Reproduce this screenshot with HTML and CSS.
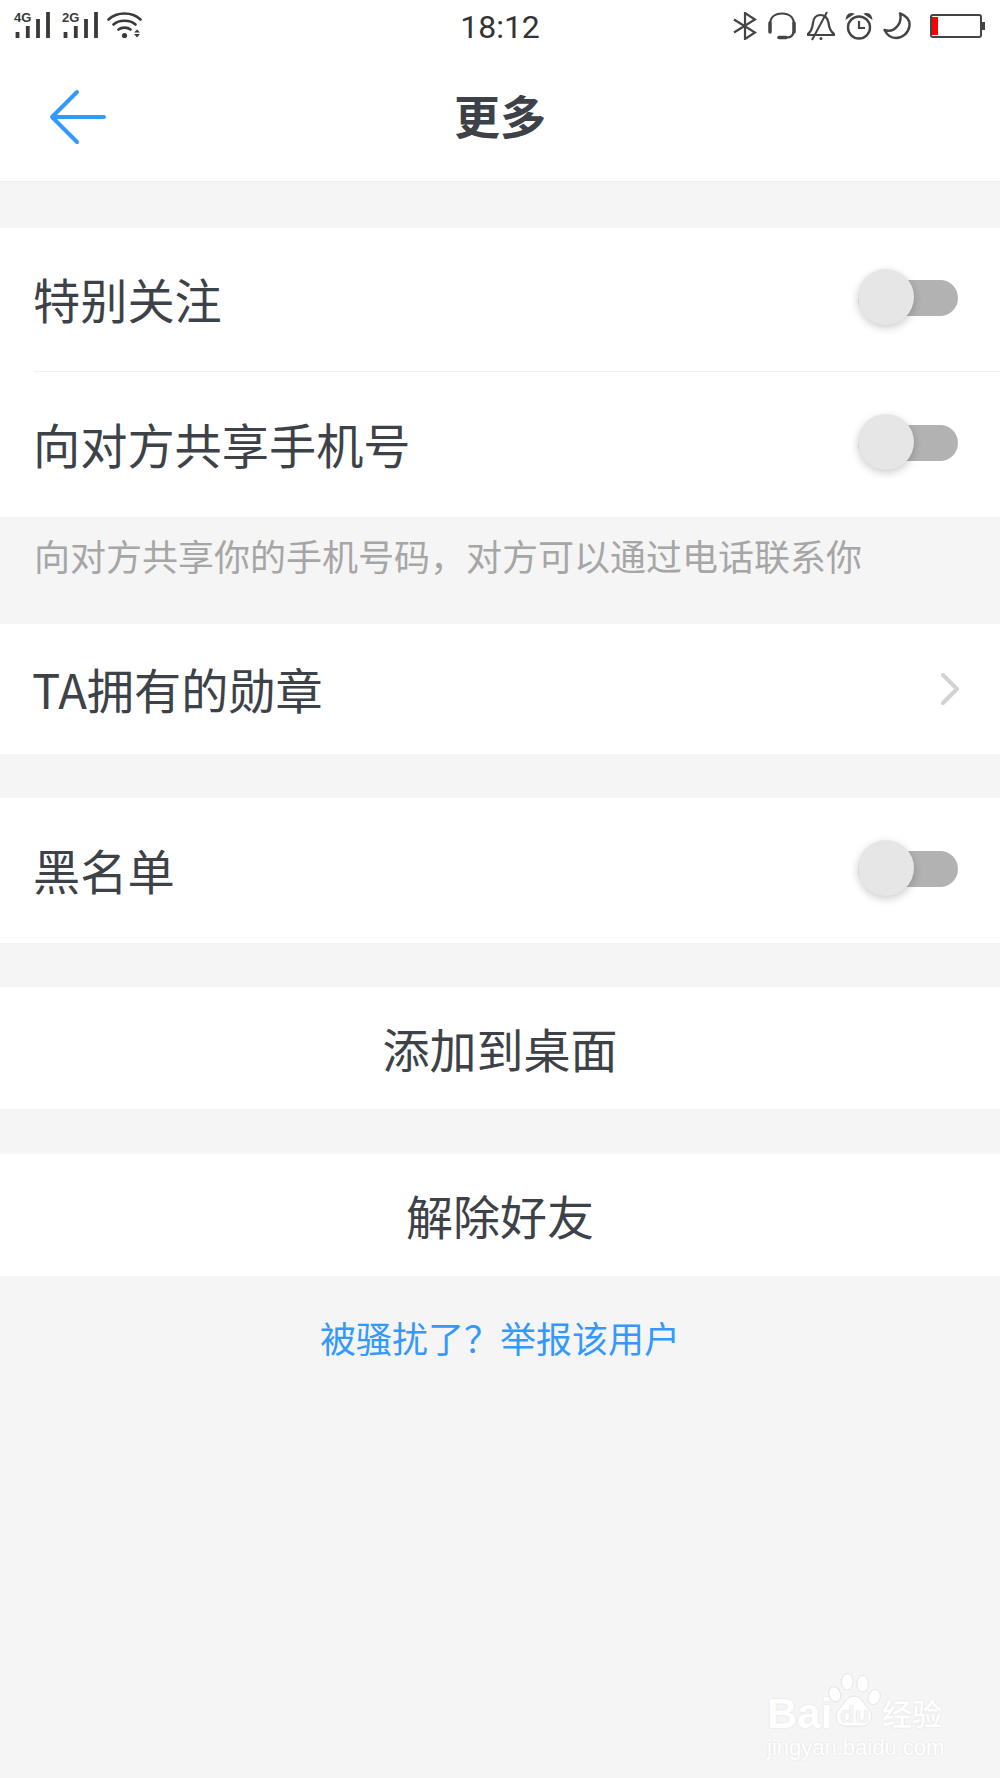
FILE: index.html
```html
<!DOCTYPE html>
<html lang="zh-CN">
<head>
    <meta charset="UTF-8">
    <meta name="viewport" content="width=device-width, initial-scale=1.0">
    <title>更多</title>
    <link rel="stylesheet" href="styles.css">
</head>
<body>
    <div class="page">
        <div class="status-bar">
            <div class="status-left">
                <div class="signal">
                    <span class="signal-label">4G</span>
                    <svg class="signal-bars" width="36" height="26" viewBox="0 0 36 26"><path d="M3.500 20v6M13.800 14v12M24 7v19M34 0v26" stroke="#3a3a3a" stroke-width="3.800" fill="none"/></svg>
                </div>
                <div class="signal">
                    <span class="signal-label">2G</span>
                    <svg class="signal-bars" width="36" height="26" viewBox="0 0 36 26"><path d="M3.500 20v6M13.800 14v12M24 7v19M34 0v26" stroke="#3a3a3a" stroke-width="3.800" fill="none"/></svg>
                </div>
                <svg class="wifi" width="36" height="28" viewBox="0 0 36 28">
                    <path d="M1.500 8.500C10 0.500 25 0.500 33.500 8.500M6.500 13.500C12 8.500 23 8.500 28.500 13.500M11.500 18.500C14.500 16 20.500 16 23.500 18.500" stroke="#3a3a3a" stroke-width="2.600" fill="none" stroke-linecap="round"/>
                    <circle cx="17.500" cy="24.500" r="2.600" fill="#3a3a3a"/>
                    <path d="M30 21.500l-3 -0.100 3 -3 3 3zM30 23l-3 0 3 3.500 3 -3.500z" fill="#3a3a3a"/>
                </svg>
            </div>
            <div class="status-time">18:12</div>
            <div class="status-right">
                <svg width="24" height="28" viewBox="0 0 24 28"><path d="M1 7.500L22 20.500 12 27V1l10 6.500L1 20.500" stroke="#444" stroke-width="2.200" fill="none"/></svg>
                <svg width="30" height="28" viewBox="0 0 30 28"><path d="M3 17V13C3 5.500 8 1.500 15 1.500S27 5.500 27 13V17M11 25.500H20C24 25.500 26 23.500 26.500 20" stroke="#444" stroke-width="2.200" fill="none"/><path d="M3 11v9M27 11v9" stroke="#444" stroke-width="3.500" stroke-linecap="round"/><path d="M12 25.500h7" stroke="#444" stroke-width="3.500" stroke-linecap="round"/></svg>
                <svg width="28" height="30" viewBox="0 0 28 30"><path d="M1 23C5 20 5.500 16 6 12 6.500 7 9.500 4 13.500 4S21 7 21.500 12C22 16 23 20 27 23V24H1Z" stroke="#444" stroke-width="2.200" fill="none" stroke-linejoin="round"/><path d="M20 1L5 29" stroke="#444" stroke-width="2"/><circle cx="14" cy="27.500" r="1.500" fill="#444"/></svg>
                <svg width="28" height="28" viewBox="0 0 28 28"><circle cx="14" cy="15.500" r="11" stroke="#444" stroke-width="2.400" fill="none"/><path d="M14 9v7h6" stroke="#444" stroke-width="2.200" fill="none"/><path d="M1.500 6.500C2 2.500 5 1 8 2ZM26.500 6.500C26 2.500 23 1 20 2Z" stroke="#444" stroke-width="1.500" fill="#444"/></svg>
                <svg width="28" height="28" viewBox="0 0 28 28"><path d="M17 1.500C24 4 27 9 26.500 14 25.500 21 19.500 26 13 26 8 26 4 23 1.500 18 6 19.500 11 18.500 14.500 14 17.500 10.500 18 5.500 17 1.500Z" stroke="#444" stroke-width="2.400" fill="none" stroke-linejoin="round"/></svg>
                <div class="battery">
                    <div class="battery-body"><div class="battery-level"></div></div>
                    <div class="battery-cap"></div>
                </div>
            </div>
        </div>

        <div class="header">
            <svg class="back" width="60" height="56" viewBox="0 0 60 56"><path d="M28 3L3 28 28 53M3 28H55" stroke="#3399ff" stroke-width="4" fill="none" stroke-linecap="round" stroke-linejoin="round"/></svg>
            <h1>更多</h1>
        </div>

        <div class="group group-first">
            <div class="row row-first row-divider">
                <span class="row-label">特别关注</span>
                <div class="switch"><div class="switch-knob"></div></div>
            </div>
            <div class="row row-tall">
                <span class="row-label">向对方共享手机号</span>
                <div class="switch"><div class="switch-knob"></div></div>
            </div>
        </div>
        <p class="note">向对方共享你的手机号码，对方可以通过电话联系你</p>

        <div class="group">
            <div class="row row-medal">
                <span class="row-label">TA拥有的勋章</span>
                <svg class="chevron" width="20" height="34" viewBox="0 0 20 34"><path d="M3 3L17 17 3 31" stroke="#d2d2d2" stroke-width="4" fill="none" stroke-linecap="round" stroke-linejoin="round"/></svg>
            </div>
        </div>

        <div class="group group-spaced">
            <div class="row row-tall">
                <span class="row-label">黑名单</span>
                <div class="switch"><div class="switch-knob"></div></div>
            </div>
        </div>

        <div class="group group-spaced">
            <div class="action">添加到桌面</div>
        </div>

        <div class="group group-last">
            <div class="action">解除好友</div>
        </div>

        <a class="report">被骚扰了？举报该用户</a>

        <div class="watermark">
            <span class="wm-bai">Bai</span>
            <svg class="wm-paw" width="54" height="58" viewBox="0 0 56 60">
                <ellipse cx="21" cy="10" rx="6" ry="8.500"/>
                <ellipse cx="37" cy="12" rx="6" ry="8.500"/>
                <ellipse cx="8" cy="23" rx="6" ry="8" transform="rotate(-20 8 23)"/>
                <ellipse cx="49" cy="26" rx="6" ry="8" transform="rotate(20 49 26)"/>
                <path d="M28 25C36 25 38 33 43 38 49 45 46 56 36 56H20C10 56 6 46 13 38 18 33 20 25 28 25Z"/>
            </svg>
            <span class="wm-du">du</span>
            <span class="wm-cn">经验</span>
            <div class="wm-url">jingyan.baidu.com</div>
        </div>
    </div>
</body>
</html>
```

FILE: styles.css
```css
:root {
    --page-bg: #f5f5f5;
    --text-color: #3d4248;
    --blue: #3399ff;
}

* {
    box-sizing: border-box;
}

body {
    margin: 0;
    background-color: var(--page-bg);
    font-family: "Noto Sans CJK SC", "Noto Sans", sans-serif;
    color: var(--text-color);
}

.page {
    position: relative;
    width: 1000px;
    height: 1778px;
    overflow: hidden;
}

/* status bar */
.status-bar {
    height: 52px;
    background-color: #fff;
    display: flex;
    justify-content: space-between;
    align-items: flex-start;
    padding: 11px 15px 0 14px;
    position: relative;
}

.status-left {
    display: flex;
    gap: 12px;
}

.signal {
    position: relative;
    width: 36px;
    height: 27px;
}

.signal-label {
    position: absolute;
    left: 0;
    top: 0;
    font-family: "Liberation Sans", sans-serif;
    font-size: 13px;
    line-height: 13px;
    font-weight: 700;
    color: #3a3a3a;
}

.signal-bars {
    position: absolute;
    left: 0;
    bottom: 0;
}

.wifi {
    margin-left: -3px;
}

.status-time {
    position: absolute;
    left: 0;
    right: 0;
    top: 7px;
    text-align: center;
    font-family: "Roboto", sans-serif;
    font-size: 32px;
    line-height: 40px;
    color: #333;
}

.status-right {
    display: flex;
    align-items: center;
    gap: 10px;
}

.battery {
    display: flex;
    align-items: center;
    margin-left: 9px;
}

.battery-body {
    width: 52px;
    height: 24px;
    border: 2px solid #444;
    border-radius: 3px;
    padding: 1px 0;
}

.battery-level {
    width: 6px;
    height: 100%;
    background-color: #f00;
}

.battery-cap {
    width: 3px;
    height: 8px;
    background-color: #444;
}

/* header */
.header {
    height: 130px;
    background-color: #fff;
    border-bottom: 1px solid #ececec;
    position: relative;
    display: flex;
    align-items: center;
    justify-content: center;
}

.header h1 {
    margin: -6px 0 0;
    font-size: 46px;
    font-weight: 700;
    line-height: 60px;
}

.back {
    position: absolute;
    left: 49px;
    top: 37px;
}

/* list */
.group {
    background-color: #fff;
}

.group-first {
    margin-top: 46px;
}

.group-spaced {
    margin-top: 44px;
}

.group-last {
    margin-top: 45px;
}

.row {
    display: flex;
    align-items: center;
    justify-content: space-between;
    padding-left: 33px;
    padding-right: 42px;
    position: relative;
}

.row-first {
    height: 144px;
}

.row-tall {
    height: 145px;
}

.row-divider::after {
    content: "";
    position: absolute;
    left: 34px;
    right: 0;
    bottom: 0;
    height: 1px;
    background-color: #f0f0f0;
}

.row-medal {
    height: 130px;
    padding-left: 32px;
    padding-right: 40px;
}

.row-label {
    font-size: 47.200px;
    line-height: 60px;
    margin-bottom: 2px;
}

.row-medal .row-label {
    margin-bottom: 0;
}

.note {
    margin: 0;
    height: 107px;
    padding: 13px 0 0 34px;
    font-size: 36px;
    line-height: 50px;
    color: #a6a6a6;
}

.switch {
    width: 100px;
    height: 36px;
    margin-top: -4px;
    border-radius: 18px;
    background-color: #b2b2b2;
    position: relative;
}

.switch-knob {
    position: absolute;
    left: 0;
    top: -11px;
    width: 56px;
    height: 56px;
    border-radius: 50%;
    background-color: #e6e6e6;
    box-shadow: 0 3px 8px rgba(0, 0, 0, 0.2);
}

.action {
    height: 122px;
    padding-bottom: 1px;
    display: flex;
    align-items: center;
    justify-content: center;
    font-size: 47px;
}

.report {
    display: block;
    margin-top: 35px;
    text-align: center;
    font-size: 36px;
    line-height: 52px;
    color: var(--blue);
}

/* watermark over the bottom corner */
.watermark {
    position: absolute;
    left: 767px;
    top: 1670px;
    width: 180px;
    height: 90px;
    color: #fff;
    text-shadow: 0 0 2px #dcdcdc;
}

.wm-bai {
    position: absolute;
    left: 0;
    top: 20px;
    font-family: "Liberation Sans", sans-serif;
    font-size: 42px;
    font-weight: 700;
    line-height: 48px;
}

.wm-paw {
    position: absolute;
    left: 60px;
    top: 2px;
    fill: #fff;
    stroke: #e4e4e4;
    stroke-width: 1;
}

.wm-du {
    position: absolute;
    left: 73px;
    top: 30px;
    font-family: "Liberation Sans", sans-serif;
    font-size: 24px;
    font-weight: 700;
    line-height: 30px;
    color: #f5f5f5;
    text-shadow: 0 0 1px #cfcfcf;
}

.wm-cn {
    position: absolute;
    left: 115px;
    top: 20px;
    font-size: 30px;
    font-weight: 500;
    line-height: 44px;
    white-space: nowrap;
}

.wm-url {
    position: absolute;
    left: 0;
    top: 65px;
    font-family: "Liberation Sans", sans-serif;
    font-size: 22px;
    line-height: 26px;
    white-space: nowrap;
}
```
